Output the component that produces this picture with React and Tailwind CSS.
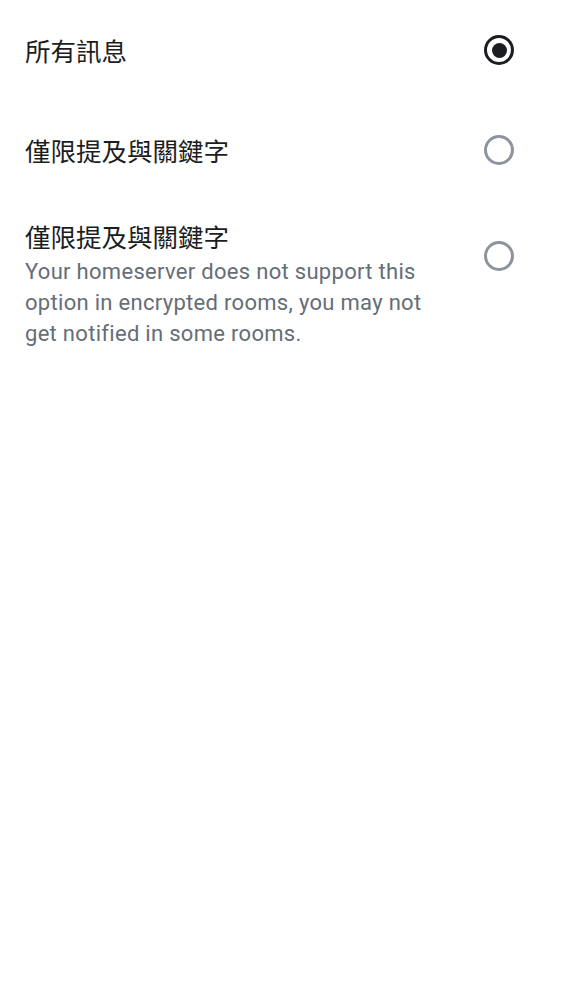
export default function App() {
  const font = { fontFamily: 'Roboto, "Noto Sans CJK TC", sans-serif' }
  return (
    <div className="min-h-[1000px] w-full bg-white" style={font}>
      <Row title="所有訊息" selected className="pt-[14px] pb-[14px]" />
      <Row title="僅限提及與關鍵字" className="pt-[14px] pb-[14px]" />
      <Row
        title="僅限提及與關鍵字"
        subtitle="Your homeserver does not support this option in encrypted rooms, you may not get notified in some rooms."
        className="pt-[20px] pb-[14px]"
      />
    </div>
  )
}

function Row({ title, subtitle, selected, className }) {
  return (
    <div className={`flex items-start pl-[25px] pr-[27px] ${className}`}>
      <div className={`flex-1 pr-[20px] ${subtitle ? '' : 'flex min-h-[72px] items-center pt-[3px]'}`}>
        <div>
          <div className="text-[25.5px] leading-[36px] text-[#1b1d22]">{title}</div>
          {subtitle && (
            <div className="text-[22px] leading-[31px] tracking-[0.3px] text-[#656d77]">{subtitle}</div>
          )}
        </div>
      </div>
      <div className="flex h-[72px] w-[72px] shrink-0 items-center justify-center">
        {selected ? (
          <div className="flex h-[30px] w-[30px] items-center justify-center rounded-full border-[3px] border-[#1b1d22]">
            <div className="h-[15px] w-[15px] rounded-full bg-[#1b1d22]" />
          </div>
        ) : (
          <div className="h-[30px] w-[30px] rounded-full border-[3px] border-[#8d949e]" />
        )}
      </div>
    </div>
  )
}
